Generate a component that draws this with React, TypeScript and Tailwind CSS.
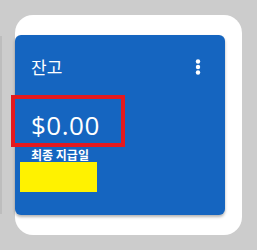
import React from 'react'

const KR = { fontFamily: '"Noto Sans CJK KR", "Noto Sans", sans-serif' }

function MoreVert() {
  return (
    <svg width="6" height="16" viewBox="0 0 6 16" className="block">
      <circle cx="3" cy="2.5" r="2.2" fill="#ffffff" />
      <circle cx="3" cy="8" r="2.2" fill="#ffffff" />
      <circle cx="3" cy="13.5" r="2.2" fill="#ffffff" />
    </svg>
  )
}

export default function App() {
  return (
    <div className="relative flex w-[257px] h-[250px] bg-[#cccccc] overflow-hidden">
      {/* edge of the previous card */}
      <div className="w-[2px] h-[178px] mt-[36px] bg-[#bdbdbd] shrink-0" />

      <div className="ml-[13px] mt-[15px] w-[227px] h-[220px] bg-white rounded-[18px] pt-[20px] pr-[17px]">
        <div className="relative h-[180px] rounded-[6px] bg-[#1565c0] shadow-[0_2px_3px_rgba(0,0,0,0.3)] px-[16px] pt-[20px]">
          <div className="flex items-center justify-between">
            <span className="text-white text-[17px] leading-[24px]" style={KR}>잔고</span>
            <span className="mr-[8px]"><MoreVert /></span>
          </div>
          <div
            className="mt-[31px] text-white text-[26px] leading-[30px] tracking-[0.5px]"
            style={{ fontFamily: '"Open Sans", sans-serif' }}
          >
            $0.00
          </div>
          <div className="mt-[7px] text-white text-[12px] font-bold leading-[15px]" style={KR}>
            최종 지급일
          </div>
        </div>
      </div>

      {/* annotation overlays */}
      <div className="absolute left-[11px] top-[95px] w-[114px] h-[52px] border-[4px] border-[#e3191f]" />
      <div className="absolute left-[20px] top-[162px] w-[77px] h-[30px] bg-[#fff200]" />
    </div>
  )
}
